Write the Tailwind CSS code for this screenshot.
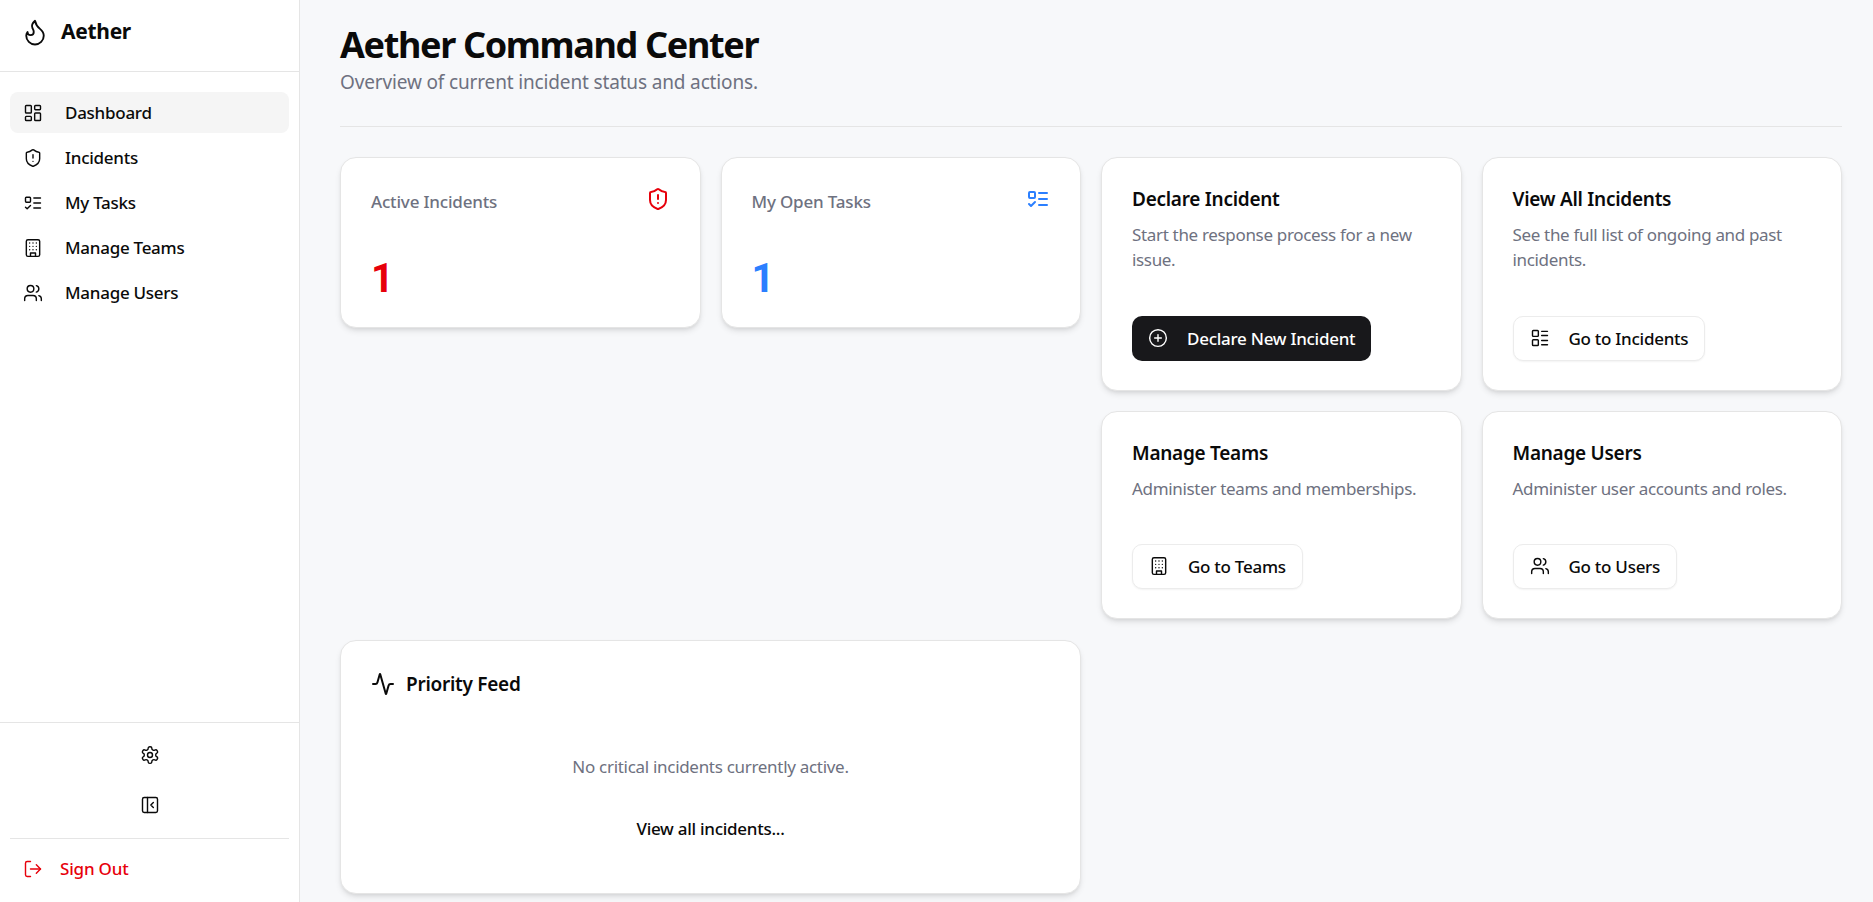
<!DOCTYPE html>
<html lang="en">

<head>
    <meta charset="UTF-8">
    <meta name="viewport" content="width=device-width, initial-scale=1.0">
    <script src="https://cdn.jsdelivr.net/npm/@tailwindcss/browser@4"></script>
    <title>Aether Command Center</title>
</head>

<body class="bg-[#f7f8fa] text-[#0a0a0a] font-['Noto_Sans',sans-serif]">
    <div class="flex h-[902px] overflow-hidden">
        <!-- Sidebar -->
        <aside class="w-[300px] shrink-0 bg-white border-r border-[#e5e5e5] flex flex-col">
            <div class="h-[72px] border-b border-[#e5e5e5] flex items-center pl-5 pb-[7px] gap-[11px]">
                <svg class="w-[30px] h-[30px]" viewBox="0 0 24 24" fill="none" stroke="currentColor" stroke-width="1.5" stroke-linecap="round" stroke-linejoin="round"><path d="M8.5 14.5A2.5 2.5 0 0 0 11 12c0-1.38-.5-2-1-3-1.072-2.143-.224-4.054 2-6 .5 2.5 2 4.9 4 6.5 2 1.6 3 3.5 3 5.5a7 7 0 1 1-14 0c0-1.153.433-2.294 1-3a2.5 2.5 0 0 0 2.5 2.5z"/></svg>
                <span class="text-[21px] font-bold tracking-[-0.3px]">Aether</span>
            </div>
            <nav class="flex-1 px-2.5 pt-5 flex flex-col gap-1 text-[17px] font-medium tracking-[-0.27px]">
                <a href="#" class="h-[41px] flex items-center gap-[22px] pl-[13px] rounded-lg bg-[#f5f5f5]">
                    <svg class="w-5 h-5" viewBox="0 0 24 24" fill="none" stroke="currentColor" stroke-width="1.7" stroke-linecap="round" stroke-linejoin="round"><rect width="7" height="9" x="3" y="3" rx="1"/><rect width="7" height="5" x="14" y="3" rx="1"/><rect width="7" height="9" x="14" y="12" rx="1"/><rect width="7" height="5" x="3" y="16" rx="1"/></svg>
                    Dashboard
                </a>
                <a href="#" class="h-[41px] flex items-center gap-[22px] pl-[13px] rounded-lg">
                    <svg class="w-5 h-5" viewBox="0 0 24 24" fill="none" stroke="currentColor" stroke-width="1.7" stroke-linecap="round" stroke-linejoin="round"><path d="M20 13c0 5-3.5 7.5-7.66 8.95a1 1 0 0 1-.67-.01C7.5 20.5 4 18 4 13V6a1 1 0 0 1 1-1c2 0 4.5-1.2 6.24-2.72a1.17 1.17 0 0 1 1.52 0C14.51 3.81 17 5 19 5a1 1 0 0 1 1 1z"/><path d="M12 8v4"/><path d="M12 16h.01"/></svg>
                    Incidents
                </a>
                <a href="#" class="h-[41px] flex items-center gap-[22px] pl-[13px] rounded-lg">
                    <svg class="w-5 h-5" viewBox="0 0 24 24" fill="none" stroke="currentColor" stroke-width="1.7" stroke-linecap="round" stroke-linejoin="round"><rect x="3" y="5" width="6" height="6" rx="1"/><path d="m3 17 2 2 4-4"/><path d="M13 6h8"/><path d="M13 12h8"/><path d="M13 18h8"/></svg>
                    My Tasks
                </a>
                <a href="#" class="h-[41px] flex items-center gap-[22px] pl-[13px] rounded-lg">
                    <svg class="w-5 h-5" viewBox="0 0 24 24" fill="none" stroke="currentColor" stroke-width="1.7" stroke-linecap="round" stroke-linejoin="round"><rect width="16" height="20" x="4" y="2" rx="2"/><path d="M9 22v-4h6v4"/><path d="M8 6h.01"/><path d="M16 6h.01"/><path d="M12 6h.01"/><path d="M12 10h.01"/><path d="M12 14h.01"/><path d="M16 10h.01"/><path d="M16 14h.01"/><path d="M8 10h.01"/><path d="M8 14h.01"/></svg>
                    Manage Teams
                </a>
                <a href="#" class="h-[41px] flex items-center gap-[22px] pl-[13px] rounded-lg">
                    <svg class="w-5 h-5" viewBox="0 0 24 24" fill="none" stroke="currentColor" stroke-width="1.7" stroke-linecap="round" stroke-linejoin="round"><path d="M16 21v-2a4 4 0 0 0-4-4H6a4 4 0 0 0-4 4v2"/><circle cx="9" cy="7" r="4"/><path d="M22 21v-2a4 4 0 0 0-3-3.87"/><path d="M16 3.13a4 4 0 0 1 0 7.75"/></svg>
                    Manage Users
                </a>
            </nav>
            <div class="border-t border-[#e5e5e5] px-2.5 h-[180px] flex flex-col">
                <button class="h-[64px] flex items-center justify-center">
                    <svg class="w-5 h-5" viewBox="0 0 24 24" fill="none" stroke="currentColor" stroke-width="1.7" stroke-linecap="round" stroke-linejoin="round"><path d="M12.22 2h-.44a2 2 0 0 0-2 2v.18a2 2 0 0 1-1 1.73l-.43.25a2 2 0 0 1-2 0l-.15-.08a2 2 0 0 0-2.73.73l-.22.38a2 2 0 0 0 .73 2.73l.15.1a2 2 0 0 1 1 1.72v.51a2 2 0 0 1-1 1.74l-.15.09a2 2 0 0 0-.73 2.73l.22.38a2 2 0 0 0 2.73.73l.15-.08a2 2 0 0 1 2 0l.43.25a2 2 0 0 1 1 1.73V20a2 2 0 0 0 2 2h.44a2 2 0 0 0 2-2v-.18a2 2 0 0 1 1-1.73l.43-.25a2 2 0 0 1 2 0l.15.08a2 2 0 0 0 2.73-.73l.22-.39a2 2 0 0 0-.73-2.73l-.15-.08a2 2 0 0 1-1-1.74v-.5a2 2 0 0 1 1-1.74l.15-.09a2 2 0 0 0 .73-2.73l-.22-.38a2 2 0 0 0-2.73-.73l-.15.08a2 2 0 0 1-2 0l-.43-.25a2 2 0 0 1-1-1.73V4a2 2 0 0 0-2-2z"/><circle cx="12" cy="12" r="3"/></svg>
                </button>
                <button class="h-[36px] flex items-center justify-center">
                    <svg class="w-5 h-5" viewBox="0 0 24 24" fill="none" stroke="currentColor" stroke-width="1.7" stroke-linecap="round" stroke-linejoin="round"><rect width="18" height="18" x="3" y="3" rx="2"/><path d="M9 3v18"/><path d="m16 15-3-3 3-3"/></svg>
                </button>
                <div class="mt-[15px] border-t border-[#e5e5e5] flex-1 flex items-center gap-[17px] pl-[13px] pb-1 text-[17px] font-medium tracking-[-0.2px] text-[#e7000b]">
                    <svg class="w-5 h-5" viewBox="0 0 24 24" fill="none" stroke="currentColor" stroke-width="1.7" stroke-linecap="round" stroke-linejoin="round"><path d="M9 21H5a2 2 0 0 1-2-2V5a2 2 0 0 1 2-2h4"/><polyline points="16 17 21 12 16 7"/><line x1="21" x2="9" y1="12" y2="12"/></svg>
                    Sign Out
                </div>
            </div>
        </aside>

        <!-- Main -->
        <main class="flex-1 pl-10 pr-[31px] pt-[20px]">
            <div class="border-b border-[#e5e5e5] h-[107px]">
                <h1 class="text-[36px] leading-[49px] font-bold tracking-[-1.35px]">Aether Command Center</h1>
                <p class="text-[19px] leading-[26px] text-[#6e7180] tracking-[-0.15px]">Overview of current incident status and actions.</p>
            </div>

            <div class="grid grid-cols-2 gap-x-5 gap-y-[21px] mt-[30px]">
                <div class="grid grid-cols-2 gap-5 items-start">
                    <div class="bg-white rounded-2xl border border-[#e5e5e5] shadow-md h-[171px] p-[30px] pt-[29px] flex flex-col">
                        <div class="flex items-start justify-between">
                            <span class="text-[17px] font-medium text-[#6e7180] tracking-[-0.18px] leading-[30px]">Active Incidents</span>
                            <svg class="w-6 h-6 text-[#e7000b]" viewBox="0 0 24 24" fill="none" stroke="currentColor" stroke-width="2" stroke-linecap="round" stroke-linejoin="round"><path d="M20 13c0 5-3.5 7.5-7.66 8.95a1 1 0 0 1-.67-.01C7.5 20.5 4 18 4 13V6a1 1 0 0 1 1-1c2 0 4.5-1.2 6.24-2.72a1.17 1.17 0 0 1 1.52 0C14.51 3.81 17 5 19 5a1 1 0 0 1 1 1z"/><path d="M12 8v4"/><path d="M12 16h.01"/></svg>
                        </div>
                        <div class="mt-[37px] text-[40px] leading-[50px] font-bold text-[#e7000b] font-['Roboto',sans-serif]">1</div>
                    </div>
                    <div class="bg-white rounded-2xl border border-[#e5e5e5] shadow-md h-[171px] p-[30px] pt-[29px] flex flex-col">
                        <div class="flex items-start justify-between">
                            <span class="text-[17px] font-medium text-[#6e7180] tracking-[-0.18px] leading-[30px]">My Open Tasks</span>
                            <svg class="w-6 h-6 text-[#2b7fff]" viewBox="0 0 24 24" fill="none" stroke="currentColor" stroke-width="2" stroke-linecap="round" stroke-linejoin="round"><rect x="3" y="5" width="6" height="6" rx="1"/><path d="m3 17 2 2 4-4"/><path d="M13 6h8"/><path d="M13 12h8"/><path d="M13 18h8"/></svg>
                        </div>
                        <div class="mt-[37px] text-[40px] leading-[50px] font-bold text-[#2b7fff] font-['Roboto',sans-serif]">1</div>
                    </div>
                </div>

                <div class="grid grid-cols-2 gap-x-5 gap-y-5">
                    <div class="bg-white rounded-2xl border border-[#e5e5e5] shadow-md h-[234px] p-[30px] pt-[27px] flex flex-col">
                        <h3 class="text-[19px] leading-[28px] font-semibold tracking-[-0.27px]">Declare Incident</h3>
                        <p class="mt-[9px] text-[17px] leading-[25px] text-[#6e7180] tracking-[-0.33px]">Start the response process for a new issue.</p>
                        <a href="#" class="mt-auto -mb-[1px] self-start h-[45px] flex items-center gap-[19px] px-4 rounded-[10px] bg-[#18181b] text-white text-[17px] font-medium tracking-[-0.27px]">
                            <svg class="w-5 h-5 -mt-[1px]" viewBox="0 0 24 24" fill="none" stroke="currentColor" stroke-width="1.7" stroke-linecap="round" stroke-linejoin="round"><circle cx="12" cy="12" r="10"/><path d="M8 12h8"/><path d="M12 8v8"/></svg>
                            Declare New Incident
                        </a>
                    </div>
                    <div class="bg-white rounded-2xl border border-[#e5e5e5] shadow-md h-[234px] p-[30px] pt-[27px] flex flex-col">
                        <h3 class="text-[19px] leading-[28px] font-semibold tracking-[-0.27px]">View All Incidents</h3>
                        <p class="mt-[9px] text-[17px] leading-[25px] text-[#6e7180] tracking-[-0.33px]">See the full list of ongoing and past incidents.</p>
                        <a href="#" class="mt-auto -mb-[1px] self-start h-[45px] flex items-center gap-[19px] px-4 rounded-[10px] bg-white border border-[#ececec] shadow-xs text-[17px] font-medium tracking-[-0.27px]">
                            <svg class="w-5 h-5 -mt-[1px]" viewBox="0 0 24 24" fill="none" stroke="currentColor" stroke-width="1.7" stroke-linecap="round" stroke-linejoin="round"><rect x="3" y="3" width="7" height="7" rx="1"/><rect x="3" y="14" width="7" height="7" rx="1"/><path d="M14 4h7"/><path d="M14 9h7"/><path d="M14 15h7"/><path d="M14 20h7"/></svg>
                            Go to Incidents
                        </a>
                    </div>
                    <div class="bg-white rounded-2xl border border-[#e5e5e5] shadow-md h-[208px] p-[30px] pt-[27px] flex flex-col">
                        <h3 class="text-[19px] leading-[28px] font-semibold tracking-[-0.27px]">Manage Teams</h3>
                        <p class="mt-[9px] text-[17px] leading-[25px] text-[#6e7180] tracking-[-0.33px]">Administer teams and memberships.</p>
                        <a href="#" class="mt-auto -mb-[1px] self-start h-[45px] flex items-center gap-[19px] px-4 rounded-[10px] bg-white border border-[#ececec] shadow-xs text-[17px] font-medium tracking-[-0.27px]">
                            <svg class="w-5 h-5 -mt-[1px]" viewBox="0 0 24 24" fill="none" stroke="currentColor" stroke-width="1.7" stroke-linecap="round" stroke-linejoin="round"><rect width="16" height="20" x="4" y="2" rx="2"/><path d="M9 22v-4h6v4"/><path d="M8 6h.01"/><path d="M16 6h.01"/><path d="M12 6h.01"/><path d="M12 10h.01"/><path d="M12 14h.01"/><path d="M16 10h.01"/><path d="M16 14h.01"/><path d="M8 10h.01"/><path d="M8 14h.01"/></svg>
                            Go to Teams
                        </a>
                    </div>
                    <div class="bg-white rounded-2xl border border-[#e5e5e5] shadow-md h-[208px] p-[30px] pt-[27px] flex flex-col">
                        <h3 class="text-[19px] leading-[28px] font-semibold tracking-[-0.27px]">Manage Users</h3>
                        <p class="mt-[9px] text-[17px] leading-[25px] text-[#6e7180] tracking-[-0.33px]">Administer user accounts and roles.</p>
                        <a href="#" class="mt-auto -mb-[1px] self-start h-[45px] flex items-center gap-[19px] px-4 rounded-[10px] bg-white border border-[#ececec] shadow-xs text-[17px] font-medium tracking-[-0.27px]">
                            <svg class="w-5 h-5 -mt-[1px]" viewBox="0 0 24 24" fill="none" stroke="currentColor" stroke-width="1.7" stroke-linecap="round" stroke-linejoin="round"><path d="M16 21v-2a4 4 0 0 0-4-4H6a4 4 0 0 0-4 4v2"/><circle cx="9" cy="7" r="4"/><path d="M22 21v-2a4 4 0 0 0-3-3.87"/><path d="M16 3.13a4 4 0 0 1 0 7.75"/></svg>
                            Go to Users
                        </a>
                    </div>
                </div>

                <!-- Priority feed -->
                <div class="bg-white rounded-2xl border border-[#e5e5e5] shadow-md h-[254px] p-[30px] pt-[25px]">
                    <div class="flex items-center gap-[11px] h-[36px]">
                        <svg class="w-6 h-6" viewBox="0 0 24 24" fill="none" stroke="currentColor" stroke-width="2" stroke-linecap="round" stroke-linejoin="round"><path d="M22 12h-2.48a2 2 0 0 0-1.93 1.46l-2.35 8.36a.25.25 0 0 1-.48 0L9.24 2.18a.25.25 0 0 0-.48 0l-2.35 8.36A2 2 0 0 1 4.49 12H2"/></svg>
                        <h3 class="text-[19px] font-semibold tracking-[-0.27px]">Priority Feed</h3>
                    </div>
                    <p class="mt-[53px] text-center text-[17px] leading-[24px] text-[#6e7180] tracking-[-0.3px]">No critical incidents currently active.</p>
                    <a href="#" class="mt-[38px] block text-center text-[17px] leading-[24px] font-medium tracking-[-0.27px]">View all incidents...</a>
                </div>
            </div>
        </main>
    </div>
</body>

</html>
